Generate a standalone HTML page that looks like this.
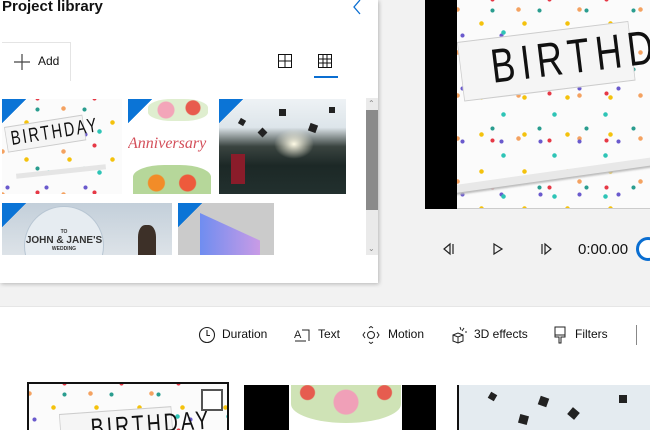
<!DOCTYPE html>
<html><head><style>
*{margin:0;padding:0;box-sizing:border-box}
body{width:650px;height:430px;overflow:hidden;background:#fff;font-family:"Liberation Sans",sans-serif;position:relative}
.abs{position:absolute}
.conf{background-color:#fbfbfb;background-image:
radial-gradient(circle,#f4c20d 2px,transparent 2.5px),
radial-gradient(circle,#2ec4b6 2px,transparent 2.5px),
radial-gradient(circle,#e63946 1.8px,transparent 2.3px),
radial-gradient(circle,#6a5acd 1.8px,transparent 2.3px),
radial-gradient(circle,#f4a261 2px,transparent 2.5px),
radial-gradient(circle,#2a9d8f 1.8px,transparent 2.3px);
background-size:43px 37px,51px 41px,57px 47px,39px 53px,61px 43px,47px 59px;
background-position:3px 5px,21px 12px,7px 23px,25px 9px,31px 31px,12px 40px}
.corner{position:absolute;width:24px;height:24px;background:linear-gradient(315deg,transparent 50%,#0b74d6 50%)}
.sign{position:absolute;background:#f5f5f5;border:1px solid #ccc;color:#111;font-family:"Liberation Sans Narrow","Liberation Sans",sans-serif;transform-origin:left top}
</style></head><body>
<div class="abs" style="left:0;top:0;width:650px;height:307px;background:#f2f2f2;border-bottom:1px solid #e6e6e6"></div>
<div class="abs" style="left:425px;top:0;width:32px;height:209px;background:#000"></div>
<div class="abs conf" style="left:457px;top:0;width:193px;height:209px;border-bottom:1px solid #ccc;overflow:hidden">
 <div class="sign" style="left:0;top:42px;width:230px;height:60px;transform:rotate(-7deg) scaleX(0.75);font-size:48px;line-height:58px;padding-left:40px;letter-spacing:8px">BIRTHDAY</div>
 <div class="abs" style="left:-10px;top:170px;width:230px;height:8px;background:#e8e8e8;transform:rotate(-8deg);box-shadow:0 2px 2px #bbb"></div>
</div>
<svg class="abs" style="left:440px;top:240px" width="120" height="18" viewBox="0 0 120 18">
<path d="M10 4 L4 9 L10 14 Z M13 4 V14" fill="none" stroke="#222" stroke-width="1.2"/>
<path d="M54 4 L62 9 L54 14 Z" fill="none" stroke="#222" stroke-width="1.2"/>
<path d="M102 4 V14 M105 4 L111 9 L105 14 Z" fill="none" stroke="#222" stroke-width="1.2"/>
</svg>
<div class="abs" style="left:578px;top:241px;font-size:15px;color:#111">0:00.00</div>
<div class="abs" style="left:636px;top:237px;width:24px;height:24px;border:3px solid #0a6ed1;border-radius:50%;background:#fff"></div>
<div class="abs" style="left:0;top:0;width:378px;height:283px;background:#fff;box-shadow:1px 1px 4px rgba(0,0,0,.25)"></div>
<div class="abs" style="left:2px;top:-2px;font-size:15px;font-weight:bold;color:#111">Project library</div>
<svg class="abs" style="left:351px;top:0" width="12" height="16"><path d="M9 0 L3 7 L9 14" fill="none" stroke="#0a6ed1" stroke-width="1.3"/></svg>
<div class="abs" style="left:2px;top:42px;width:69px;height:39px;border:1px solid #e4e4e4;border-left:none;border-bottom:none"></div>
<svg class="abs" style="left:13px;top:53px" width="18" height="18"><path d="M9 1V17M1 9H17" stroke="#444" stroke-width="1.2"/></svg>
<div class="abs" style="left:38px;top:54px;font-size:12px;color:#111">Add</div>
<svg class="abs" style="left:278px;top:54px" width="14" height="14"><path d="M.5 .5H13.5V13.5H.5Z M7 0V14 M0 7H14" fill="none" stroke="#111" stroke-width="1"/></svg>
<svg class="abs" style="left:318px;top:54px" width="14" height="14"><path d="M.5 .5H13.5V13.5H.5Z M5 0V14 M9 0V14 M0 5H14 M0 9H14" fill="none" stroke="#111" stroke-width="1"/></svg>
<div class="abs" style="left:314px;top:76px;width:24px;height:2px;background:#0a6ed1"></div>
<div class="abs conf" style="left:2px;top:99px;width:120px;height:95px;overflow:hidden">
 <div class="sign" style="left:2px;top:28px;width:110px;height:26px;transform:rotate(-9deg) scaleX(0.72);font-size:20px;line-height:24px;padding-left:6px;letter-spacing:3px">BIRTHDAY</div>
 <div class="abs" style="left:14px;top:70px;width:90px;height:5px;background:#e5e5e5;transform:rotate(-6deg)"></div>
</div>
<div class="corner" style="left:2px;top:99px"></div>
<div class="abs" style="left:128px;top:99px;width:85px;height:95px;background:#fff;overflow:hidden">
 <div class="abs" style="left:20px;top:0;width:60px;height:22px;border-radius:40%;background:radial-gradient(circle at 30% 50%,#f3a5b9 8px,transparent 9px),radial-gradient(circle at 75% 40%,#e85b4e 7px,transparent 8px),#dfeecf"></div>
 <div class="abs" style="left:0;top:36px;font-family:'Liberation Serif',serif;font-style:italic;font-size:16px;color:#d4505b">Anniversary</div>
 <div class="abs" style="left:5px;top:66px;width:78px;height:30px;border-radius:40% 40% 0 0;background:radial-gradient(circle at 30% 60%,#f28c28 8px,transparent 9px),radial-gradient(circle at 70% 60%,#ee5a3c 8px,transparent 9px),#b6d79a"></div>
</div>
<div class="corner" style="left:128px;top:99px"></div>
<div class="abs" style="left:219px;top:99px;width:127px;height:95px;background:linear-gradient(180deg,#eef2f5 0%,#dde5ea 30%,#3a4440 50%,#1c2826 70%,#22302e 100%);overflow:hidden">
 <div class="abs" style="left:55px;top:30px;width:40px;height:30px;border-radius:50%;background:radial-gradient(#fffbe6,transparent 70%)"></div>
 <div class="abs" style="left:12px;top:55px;width:14px;height:30px;background:#8a1c2a"></div>
 <div class="abs" style="left:20px;top:20px;width:6px;height:6px;background:#222;transform:rotate(30deg)"></div>
 <div class="abs" style="left:60px;top:10px;width:7px;height:7px;background:#222"></div>
 <div class="abs" style="left:90px;top:25px;width:8px;height:8px;background:#222;transform:rotate(20deg)"></div>
 <div class="abs" style="left:110px;top:8px;width:6px;height:6px;background:#222"></div>
 <div class="abs" style="left:40px;top:30px;width:7px;height:7px;background:#222;transform:rotate(45deg)"></div>
</div>
<div class="corner" style="left:219px;top:99px"></div>
<div class="abs" style="left:2px;top:203px;width:170px;height:52px;background:linear-gradient(#c3cfda,#dde3e8);overflow:hidden">
 <div class="abs" style="left:22px;top:3px;width:80px;height:80px;border-radius:50%;background:#e6ecf1;border:1px solid #b8c6d3"></div>
 <div class="abs" style="left:16px;top:26px;width:92px;text-align:center;font-size:10px;font-weight:bold;color:#333"><div style="font-size:5px">TO</div>JOHN &amp; JANE'S<div style="font-size:5px">WEDDING</div></div>
 <div class="abs" style="left:136px;top:22px;width:18px;height:30px;background:#3d3028;border-radius:40% 40% 0 0"></div>
</div>
<div class="corner" style="left:2px;top:203px"></div>
<div class="abs" style="left:178px;top:203px;width:96px;height:52px;background:#cbcbcb;overflow:hidden">
 <div class="abs" style="left:22px;top:10px;width:60px;height:50px;background:linear-gradient(90deg,#6f8df0,#c99be6);clip-path:polygon(0 0,100% 55%,100% 100%,0 100%)"></div>
</div>
<div class="corner" style="left:178px;top:203px"></div>
<div class="abs" style="left:366px;top:98px;width:12px;height:157px;background:#eaeaea"></div>
<div class="abs" style="left:366px;top:110px;width:12px;height:100px;background:#8a8a8a"></div>
<div class="abs" style="left:368px;top:99px;font-size:8px;color:#888">&#8963;</div>
<div class="abs" style="left:368px;top:244px;font-size:8px;color:#888">&#8964;</div>
<svg class="abs" style="left:198px;top:326px" width="18" height="18"><circle cx="9" cy="9" r="7.5" fill="none" stroke="#222" stroke-width="1.1"/><path d="M9 4V9.5H12" fill="none" stroke="#222" stroke-width="1.1"/></svg>
<div class="abs" style="left:222px;top:327px;font-size:12px;color:#111">Duration</div>
<svg class="abs" style="left:294px;top:326px" width="18" height="18"><text x="0" y="12" font-size="11" font-family="Liberation Sans" fill="#222">A</text><path d="M8 4H15V15" fill="none" stroke="#222" stroke-width="1"/><path d="M1 15H12" stroke="#222"/></svg>
<div class="abs" style="left:318px;top:327px;font-size:12px;color:#111">Text</div>
<svg class="abs" style="left:362px;top:326px" width="18" height="18"><circle cx="9" cy="9" r="3.5" fill="none" stroke="#222"/><path d="M3 6L1 9L3 12M15 6L17 9L15 12M7 2L9 0.5L11 2M7 16L9 17.5L11 16" fill="none" stroke="#222"/></svg>
<div class="abs" style="left:388px;top:327px;font-size:12px;color:#111">Motion</div>
<svg class="abs" style="left:450px;top:325px" width="18" height="20"><path d="M3 10L8 8L13 10V16L8 18L3 16Z M3 10L8 12L13 10 M8 12V18" fill="none" stroke="#222"/><path d="M10 2L11 5 M14 3L12 6 M15 7H17" stroke="#222"/></svg>
<div class="abs" style="left:474px;top:327px;font-size:12px;color:#111">3D effects</div>
<svg class="abs" style="left:553px;top:326px" width="14" height="18"><path d="M2 1H12V9H2Z M2 9H12V11H8V17H6V11H2Z" fill="none" stroke="#222"/></svg>
<div class="abs" style="left:575px;top:327px;font-size:12px;color:#111">Filters</div>
<div class="abs" style="left:636px;top:325px;width:1px;height:20px;background:#888"></div>
<div class="abs conf" style="left:27px;top:382px;width:202px;height:48px;border:2px solid #111;border-bottom:none;overflow:hidden">
 <div class="sign" style="left:30px;top:30px;width:150px;height:30px;transform:rotate(-4deg) scaleX(0.75);font-size:26px;line-height:30px;padding-left:40px;letter-spacing:4px">BIRTHDAY</div>
</div>
<div class="abs" style="left:201px;top:389px;width:22px;height:22px;border:2px solid #555;background:#fff"></div>
<div class="abs" style="left:244px;top:385px;width:45px;height:45px;background:#000"></div>
<div class="abs" style="left:289px;top:385px;width:113px;height:45px;background:#fff;overflow:hidden">
 <div class="abs" style="left:2px;top:0;width:110px;height:38px;border-radius:0 0 50% 50%;background:radial-gradient(circle at 50% 45%,#f0a0b8 12px,transparent 13px),radial-gradient(circle at 15% 20%,#e65c4f 7px,transparent 8px),radial-gradient(circle at 85% 20%,#e65c4f 7px,transparent 8px),#cfe3b6"></div>
</div>
<div class="abs" style="left:402px;top:385px;width:34px;height:45px;background:#000"></div>
<div class="abs" style="left:457px;top:385px;width:193px;height:45px;background:#e4ebf0;border-left:2px solid #111">
 <div class="abs" style="left:30px;top:8px;width:7px;height:7px;background:#222;transform:rotate(30deg)"></div>
 <div class="abs" style="left:80px;top:12px;width:9px;height:9px;background:#222;transform:rotate(20deg)"></div>
 <div class="abs" style="left:110px;top:24px;width:9px;height:9px;background:#222;transform:rotate(40deg)"></div>
 <div class="abs" style="left:160px;top:10px;width:8px;height:8px;background:#222"></div>
 <div class="abs" style="left:60px;top:30px;width:9px;height:9px;background:#222;transform:rotate(15deg)"></div>
</div>
</body></html>
